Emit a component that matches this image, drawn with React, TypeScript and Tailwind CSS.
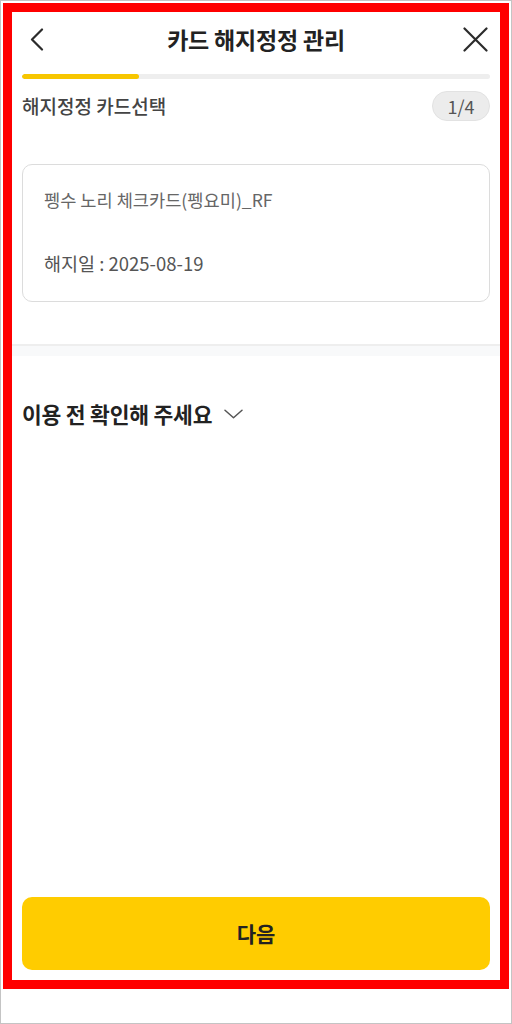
import React from "react"

const font = { fontFamily: '"Noto Sans CJK KR", "Noto Sans", sans-serif' }

function BackIcon() {
  return (
    <svg width="14" height="23" viewBox="0 0 14 23" fill="none">
      <path d="M12 1.5L2 11.5L12 21.5" stroke="#2b2b2b" strokeWidth="2.2" strokeLinecap="round" strokeLinejoin="round" />
    </svg>
  )
}

function CloseIcon() {
  return (
    <svg width="25" height="25" viewBox="0 0 25 25" fill="none">
      <path d="M1.5 1.5L23.5 23.5M23.5 1.5L1.5 23.5" stroke="#2b2b2b" strokeWidth="2.2" strokeLinecap="round" />
    </svg>
  )
}

function ChevronDown() {
  return (
    <svg width="19" height="10" viewBox="0 0 19 10" fill="none">
      <path d="M1 1.2L9.5 8.8L18 1.2" stroke="#555" strokeWidth="1.5" strokeLinecap="round" strokeLinejoin="round" />
    </svg>
  )
}

export default function App() {
  const step = 1
  const total = 4

  return (
    <div className="w-[512px] h-[1024px] bg-white border border-[#c4c4c4] p-[2px]" style={font}>
      <div className="h-[986px] border-[9px] border-[#ff0000] flex flex-col bg-white">
        {/* 헤더 */}
        <div className="h-[54px] px-[10px] flex items-center">
          <div className="w-[40px] pl-[8px] flex items-center">
            <BackIcon />
          </div>
          <h1 className="flex-1 text-center text-[23px] font-bold text-[#222] tracking-[-0.2px]">카드 해지정정 관리</h1>
          <div className="w-[40px] flex items-center justify-end pr-[2px]">
            <CloseIcon />
          </div>
        </div>

        {/* 진행바 */}
        <div className="mx-[10px] mt-[8px] h-[5px] rounded-full bg-[#eeeeee] overflow-hidden">
          <div className="h-full rounded-full bg-[#f7c600]" style={{ width: `${(step / total) * 100}%` }} />
        </div>

        <div className="h-[54px] px-[10px] flex items-center justify-between">
          <span className="text-[19px] font-medium text-[#444]">해지정정 카드선택</span>
          <span className="w-[58px] h-[30px] rounded-full bg-[#ececec] border border-[#e2e2e2] flex items-center justify-center text-[18px] text-[#555]">
            {step}/{total}
          </span>
        </div>

        {/* 카드 */}
        <div className="mx-[10px] mt-[31px] h-[138px] border border-[#dcdcdc] rounded-[10px] px-[21px] pt-[22px]">
          <p className="h-[26px] leading-[26px] text-[17.6px] text-[#666]">펭수 노리 체크카드(펭요미)_RF</p>
          <p className="mt-[37px] h-[26px] leading-[26px] text-[18.5px] text-[#555]">해지일 : 2025-08-19</p>
        </div>

        <div className="mt-[42px] h-[12px] border-t-2 border-[#eeeeee] bg-[#f8f9fa]" />

        <div className="mt-[44px] px-[10px] flex items-center gap-[12px]">
          <span className="text-[21.5px] leading-[28px] font-bold text-[#222] tracking-[-0.2px]">이용 전 확인해 주세요</span>
          <ChevronDown />
        </div>

        <div className="flex-1" />

        <button className="mx-[10px] mb-[10px] h-[73px] rounded-[10px] bg-[#ffcc00] text-[21px] font-bold text-[#222]">
          다음
        </button>
      </div>
    </div>
  )
}
